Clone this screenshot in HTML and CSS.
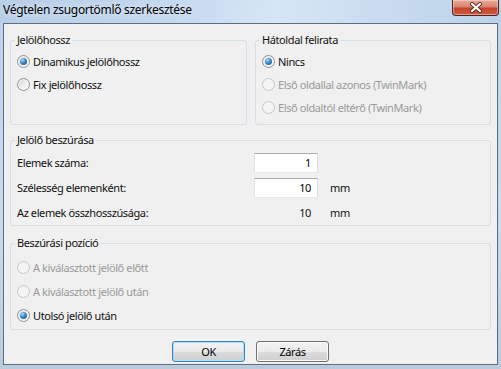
FILE: index.html
```html
<!DOCTYPE html>
<html lang="hu">
<head>
  <meta charset="UTF-8">
  <title>Végtelen zsugortömlő szerkesztése</title>
  <link rel="stylesheet" href="styles.css">
</head>
<body>
  <div class="window">
    <div class="titlebar">
      <span class="title">Végtelen zsugortömlő szerkesztése</span>
      <span class="close">
        <svg width="14" height="11" viewBox="0 0 14 11">
          <path d="M3 2 L11 9 M11 2 L3 9" stroke="#5a2a22" stroke-width="4" stroke-linecap="round"/>
          <path d="M3 2 L11 9 M11 2 L3 9" stroke="#ffffff" stroke-width="2.2" stroke-linecap="round"/>
        </svg>
      </span>
    </div>

    <div class="client">
      <div class="top-row">
        <fieldset class="group group-left">
          <legend>Jelölőhossz</legend>
          <div class="option checked"><span class="mark"></span>Dinamikus jelölőhossz</div>
          <div class="option"><span class="mark"></span>Fix jelölőhossz</div>
        </fieldset>
        <fieldset class="group group-right">
          <legend>Hátoldal felirata</legend>
          <div class="option checked"><span class="mark"></span>Nincs</div>
          <div class="option disabled"><span class="mark"></span>Első oldallal azonos (TwinMark)</div>
          <div class="option disabled"><span class="mark"></span>Első oldaltól eltérő (TwinMark)</div>
        </fieldset>
      </div>

      <fieldset class="group group-insert">
        <legend>Jelölő beszúrása</legend>
        <div class="fields">
          <span>Elemek száma:</span>
          <input class="num" type="text" value="1">
          <span></span>

          <span>Szélesség elemenként:</span>
          <input class="num" type="text" value="10">
          <span>mm</span>

          <span>Az elemek összhosszúsága:</span>
          <span class="value">10</span>
          <span>mm</span>
        </div>
      </fieldset>

      <fieldset class="group group-position">
        <legend>Beszúrási pozíció</legend>
        <div class="option disabled"><span class="mark"></span>A kiválasztott jelölő előtt</div>
        <div class="option disabled"><span class="mark"></span>A kiválasztott jelölő után</div>
        <div class="option checked"><span class="mark"></span>Utolsó jelölő után</div>
      </fieldset>

      <div class="buttons">
        <button class="btn btn-default">OK</button>
        <button class="btn">Zárás</button>
      </div>
    </div>
  </div>
</body>
</html>
```

FILE: styles.css
```css
* {
  box-sizing: border-box;
}

html, body {
  margin: 0;
  height: 100%;
}

body {
  font-family: "Noto Sans", "Liberation Sans", sans-serif;
  font-size: 11px;
  letter-spacing: -0.4px;
  color: #111;
  overflow: hidden;
}

/* ablak keret */
.window {
  width: 501px;
  height: 369px;
  display: flex;
  flex-direction: column;
  background: linear-gradient(to bottom, #bcd2ea, #c8dbef 60%, #bccbdb);
}

.titlebar {
  height: 23px;
  display: flex;
  align-items: flex-start;
  padding: 0 2px 0 3px;
  background: linear-gradient(100deg, #b7cee8 0%, #c5d9ef 35%, #d7e6f5 55%, #cadcf0 75%, #bcd2ea 100%);
}

.title {
  font-size: 12px;
  line-height: 14px;
  letter-spacing: -0.3px;
  margin-top: 3px;
  color: #000;
  text-shadow: 0 0 6px rgba(255, 255, 255, 0.8);
}

.close {
  margin-left: auto;
  width: 47px;
  height: 16px;
  display: flex;
  align-items: center;
  justify-content: center;
  border: 1px solid #4a2722;
  border-top: none;
  border-radius: 0 0 4px 4px;
  background: linear-gradient(#e9ab9c 0%, #d98470 45%, #c4442a 55%, #cc5a40 100%);
  box-shadow: inset 0 0 0 1px rgba(255, 220, 210, 0.5);
}

.client {
  flex: 1;
  margin: 0 3px 4px;
  border: 1px solid #5c6e84;
  background: #f0f0f0;
  padding: 9px 6px 0;
  display: flex;
  flex-direction: column;
}

/* csoportok */
.top-row {
  display: flex;
  gap: 8px;
}

.group {
  margin: 0;
  padding: 3px 6px 5px;
  border: 1px solid #d5dfe5;
  border-radius: 3px;
  min-width: 0;
}

.group legend {
  padding: 0 2px;
  margin-left: -2px;
  line-height: 14px;
  background: #f0f0f0;
}

.group-left {
  width: 237px;
}

.group-right {
  width: 236px;
}

.group-insert {
  margin-top: 8px;
  padding: 3px 6px 0;
}

.group-position {
  margin-top: 10px;
  padding: 5px 6px 2px;
}

.group-position .option {
  height: 24px;
}

/* radio gombok */
.option {
  display: flex;
  align-items: center;
  gap: 3px;
  height: 23px;
}

.mark {
  position: relative;
  flex: none;
  width: 13px;
  height: 13px;
  border-radius: 50%;
  border: 1px solid #8f9090;
  background: linear-gradient(135deg, #d4d4d4 0%, #efefef 55%, #ffffff 100%);
  box-shadow: inset 0 0 0 1px #f6f6f6;
}

.checked .mark::after {
  content: "";
  position: absolute;
  top: 2px;
  left: 2px;
  width: 7px;
  height: 7px;
  border-radius: 50%;
  background: radial-gradient(circle at 35% 30%, #a8dafb 0%, #3d86c6 45%, #1b4b7a 100%);
}

.disabled {
  color: #9a9a9a;
}

.disabled .mark {
  border-color: #c6c6c6;
  background: #f4f4f4;
  box-shadow: none;
}

/* mezok */
.fields {
  display: grid;
  grid-template-columns: 225px 64px auto;
  grid-auto-rows: 25px;
  column-gap: 12px;
  align-items: center;
}

.num {
  width: 64px;
  height: 20px;
  margin: 0;
  padding: 0 6px;
  font: inherit;
  letter-spacing: inherit;
  color: #000;
  text-align: right;
  background: #fff;
  border: 1px solid;
  border-color: #abadb3 #dbdfe6 #e3e9ef #e2e3ea;
  outline: none;
}

.value {
  text-align: right;
  padding-right: 7px;
}

/* gombok */
.buttons {
  display: flex;
  justify-content: center;
  gap: 11px;
  margin-top: 11px;
}

.btn {
  width: 73px;
  height: 21px;
  margin: 0;
  padding: 0;
  font: inherit;
  letter-spacing: inherit;
  color: #000;
  border: 1px solid #707070;
  border-radius: 3px;
  background: linear-gradient(#f2f2f2 0%, #ebebeb 50%, #dddddd 51%, #cfcfcf 100%);
  box-shadow: inset 0 0 0 1px #fbfbfb;
}

.btn-default {
  border-color: #3c7fb1;
  box-shadow: inset 0 0 0 1px #a6e2fb;
}
```
